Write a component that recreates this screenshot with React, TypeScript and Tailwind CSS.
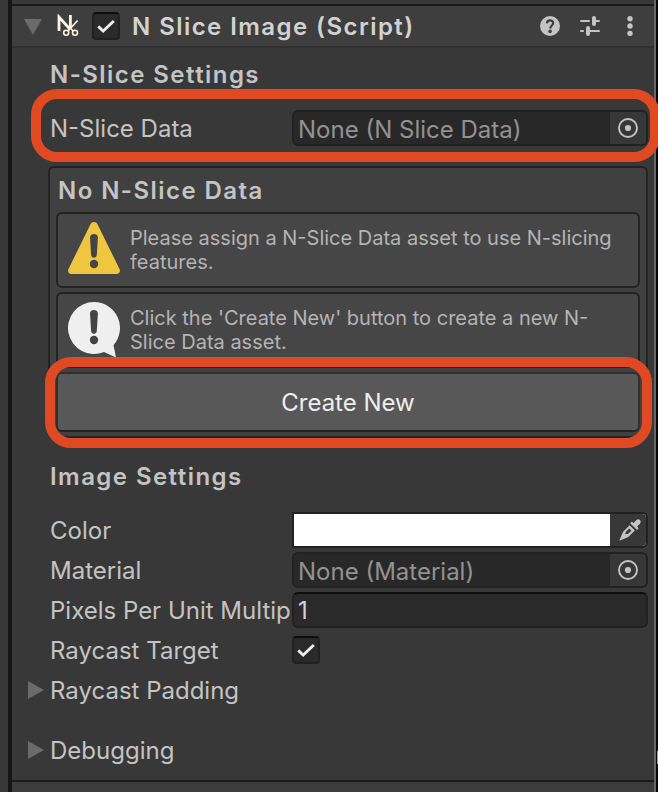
import type { ReactNode } from 'react';

function Check() {
  return (
    <svg width="24" height="24" viewBox="0 0 24 24" fill="none" className="block">
      <path d="M4.200 12.400 9.200 17 19.800 7" stroke="#eeeeee" strokeWidth="2.800" />
    </svg>
  );
}

function Checkbox() {
  return (
    <div className="w-7 h-7 shrink-0 rounded-[4px] border-2 border-[#212121] border-t-[#0d0d0d] bg-[#2a2a2a]">
      <Check />
    </div>
  );
}

function ScriptIcon() {
  return (
    <svg width="24" height="24" viewBox="0 0 24 24" fill="none" className="block" stroke="#fdf4e3">
      <path d="M4 17V3L14.800 15" strokeWidth="2.800" />
      <path d="M15.400 1v13" strokeWidth="2.800" />
      <path d="M22.600 6.500 13 17" strokeWidth="1.700" />
      <path d="M14.500 13.500l3.700 3.500" strokeWidth="1.700" />
      <circle cx="11.200" cy="18.700" r="2.500" strokeWidth="1.600" />
      <circle cx="20" cy="18.700" r="2.500" strokeWidth="1.600" />
    </svg>
  );
}

function HelpIcon() {
  return (
    <svg width="20" height="20" viewBox="0 0 20 20" className="block">
      <circle cx="10" cy="10" r="10" fill="#c4c4c4" />
      <path
        d="M6.900 7.400C7 5.400 8.200 4.400 10 4.400c1.900 0 3.200 1.100 3.200 2.700 0 2.400-2.900 2.400-2.900 5.300"
        fill="none"
        stroke="#3e3e3e"
        strokeWidth="2.200"
      />
      <circle cx="10.100" cy="15.400" r="1.800" fill="#3e3e3e" />
    </svg>
  );
}

function PresetIcon() {
  return (
    <svg width="20" height="20" viewBox="0 0 20 20" className="block" stroke="#c4c4c4" strokeLinecap="round">
      <path d="M1 5h8M14 5h5M1 15h2M8 15h11" strokeWidth="2" />
      <path d="M14 2v6M8 12v6" strokeWidth="4" />
    </svg>
  );
}

function MenuIcon() {
  return (
    <svg width="6" height="20" viewBox="0 0 6 20" className="block" fill="#c4c4c4">
      <circle cx="3" cy="2.700" r="2.700" />
      <circle cx="3" cy="10" r="2.700" />
      <circle cx="3" cy="17.400" r="2.700" />
    </svg>
  );
}

function TargetIcon() {
  return (
    <svg width="20" height="20" viewBox="0 0 20 20" className="block">
      <circle cx="10" cy="10" r="9" fill="none" stroke="#c4c4c4" strokeWidth="1.900" />
      <circle cx="10" cy="10" r="3.100" fill="#c4c4c4" />
    </svg>
  );
}

function DropperIcon() {
  return (
    <svg width="22" height="22" viewBox="0 0 22 22" className="block">
      <path
        d="M11.200 4.200l1.500-1.400 2 1.200 2.200-2.600C18.200 0 20 .2 21 1c1 1 .9 2.800-.2 4l-2.600 2.200 1.300 2.200-1.400 1.500z"
        fill="#c4c4c4"
      />
      <path d="M10.600 6.200l5.300 5.200-6.600 6.500L1.200 21.500l-.7-.6 3.600-8.200z" fill="#c4c4c4" />
      <path d="M6 15.200l1-2.500 3.200-3.100 2.200 2.200-3.200 3z" fill="#383838" />
    </svg>
  );
}

function WarningIcon() {
  return (
    <svg width="52" height="52" viewBox="0 0 52 52" className="block shrink-0">
      <path
        d="M22.500 2.200C23.900-.7 28.100-.7 29.500 2.200l22 44.800c1.200 2.600-.2 5-3 5H3.500c-2.800 0-4.200-2.400-3-5z"
        fill="#f0c53f"
      />
      <path d="M22 15.500c-.1-4.600 8-4.600 7.900 0l-1.100 17.600c-.2 3.700-5.500 3.700-5.700 0z" fill="#444444" />
      <circle cx="26" cy="42" r="4.200" fill="#444444" />
    </svg>
  );
}

function InfoIcon() {
  return (
    <svg width="52" height="56" viewBox="0 0 52 56" className="block shrink-0">
      <path d="M26 0a26 26 0 0 1 19.500 43.200L48 55.500 36 50A26 26 0 1 1 26 0z" fill="#efefef" />
      <path d="M22 11.500c-.1-4.600 8-4.600 7.900 0l-1.100 17.600c-.2 3.700-5.500 3.700-5.700 0z" fill="#444444" />
      <circle cx="26" cy="38" r="4.200" fill="#444444" />
    </svg>
  );
}

function Heading({ children }: { children: ReactNode }) {
  return <div className="h-9 pt-px pl-[2px] font-semibold tracking-[1.44px]">{children}</div>;
}

function Row({ label, children }: { label: string; children: ReactNode }) {
  return (
    <div className="flex h-9 items-center">
      <div className="w-[242px] shrink-0 whitespace-nowrap pt-[2px]">{label}</div>
      {children}
    </div>
  );
}

function ObjectField({ text }: { text: string }) {
  return (
    <div className="flex h-9 w-[356px] overflow-hidden rounded-[6px] border-2 border-[#212121] bg-[#282828]">
      <div className="flex-1 pl-1 leading-[35px] text-[#929292]">{text}</div>
      <div className="flex w-9 items-center justify-center bg-[#373737]">
        <TargetIcon />
      </div>
    </div>
  );
}

function HelpBox({ icon, children }: { icon: ReactNode; children: ReactNode }) {
  return (
    <div className="flex h-[76px] rounded-[6px] border-2 border-[#232323] bg-[#464646] pl-[10px] pt-2">
      {icon}
      <div className="ml-[10px] mt-1 text-[20px] leading-6 text-[#b4b4b4]">{children}</div>
    </div>
  );
}

function Foldout({ label }: { label: string }) {
  return (
    <div className="-ml-[22px] flex h-9 items-center">
      <svg width="16" height="18" viewBox="0 0 16 18" className="mr-[6px] block">
        <path d="M0 0l16 9-16 9z" fill="#6b6b6b" />
      </svg>
      <div className="pt-[2px]">{label}</div>
    </div>
  );
}

export default function App() {
  return (
    <div className="relative flex h-[792px] w-[658px] overflow-hidden bg-[#383838] font-['Inter',sans-serif] text-[24px] leading-9 text-[#c4c4c4]">
      <div className="ml-2 w-1 shrink-0 bg-[#161616]" />

      <div className="flex w-[642px] shrink-0 flex-col pt-1">
        {/* Component header */}
        <div className="flex h-11 items-center border-b-2 border-t-2 border-b-[#303030] border-t-[#1a1a1a] bg-[#3e3e3e] pl-3">
          <svg width="18" height="16" viewBox="0 0 18 16" className="mt-[2px] block">
            <path d="M0 0h18L9 16z" fill="#6b6b6b" />
          </svg>
          <div className="ml-[13px] mr-[13px]">
            <ScriptIcon />
          </div>
          <Checkbox />
          <div className="ml-3 flex-1 whitespace-nowrap pt-[2px] font-semibold tracking-[1.44px] text-[#d2d2d2]">
            N Slice Image (Script)
          </div>
          <HelpIcon />
          <div className="ml-5 mr-[27px]">
            <PresetIcon />
          </div>
          <div className="mr-[21px]">
            <MenuIcon />
          </div>
        </div>

        {/* Inspector body */}
        <div className="pl-9 pr-[6px]">
          <div className="mt-2">
            <Heading>N-Slice Settings</Heading>
          </div>
          <div className="mt-[18px] pl-[2px]">
            <Row label="N-Slice Data">
              <ObjectField text="None (N Slice Data)" />
            </Row>
          </div>

          <div className="mt-5 h-[272px] rounded-[6px] border-2 border-[#232323] bg-[#404040] px-[6px]">
            <div className="mt-1">
              <Heading>No N-Slice Data</Heading>
            </div>
            <div className="mt-1 flex flex-col gap-1">
              <HelpBox icon={<WarningIcon />}>
                Please assign a N-Slice Data asset to use N-slicing
                <br />
                features.
              </HelpBox>
              <HelpBox icon={<InfoIcon />}>
                Click the 'Create New' button to create a new N-
                <br />
                Slice Data asset.
              </HelpBox>
              <button className="h-[60px] rounded-[6px] border-2 border-[#303030] border-b-[#242424] bg-[#585858] pt-[2px] text-[#eeeeee]">
                Create New
              </button>
            </div>
          </div>

          <div className="mt-5">
            <Heading>Image Settings</Heading>
          </div>
          <div className="mt-[18px] flex flex-col gap-1 pl-[2px]">
            <Row label="Color">
              <div className="flex h-9 w-[356px] overflow-hidden rounded-r-[6px] border-2 border-[#212121] bg-white">
                <div className="flex-1" />
                <div className="flex w-9 items-center justify-center bg-[#383838] pl-1">
                  <DropperIcon />
                </div>
              </div>
            </Row>
            <Row label="Material">
              <ObjectField text="None (Material)" />
            </Row>
            <Row label="Pixels Per Unit Multip">
              <div className="h-9 w-[356px] rounded-[6px] border-2 border-[#212121] border-t-[#0d0d0d] bg-[#2a2a2a] pl-1 leading-[34px] text-[#d2d2d2]">
                1
              </div>
            </Row>
            <Row label="Raycast Target">
              <Checkbox />
            </Row>
            <Foldout label="Raycast Padding" />
            <div className="mt-5">
              <Foldout label="Debugging" />
            </div>
          </div>
        </div>

        <div className="mt-auto h-3 border-t-2 border-[#1a1a1a] bg-[#3c3c3c]" />
      </div>

      <div className="w-[2px] shrink-0 bg-[#666666]" />
      <div className="flex w-[2px] shrink-0 flex-col bg-[#080808] pt-[751px]">
        <div className="ml-px h-[13px] bg-[#a0a0a0]" />
      </div>

      {/* Callout outlines */}
      <div className="absolute left-[31px] top-[89px] h-[73px] w-[629px] rounded-[26px] border-10 border-[#e04a22]" />
      <div className="absolute left-[45px] top-[357px] h-[91px] w-[607px] rounded-[26px] border-10 border-[#e04a22]" />
    </div>
  );
}
